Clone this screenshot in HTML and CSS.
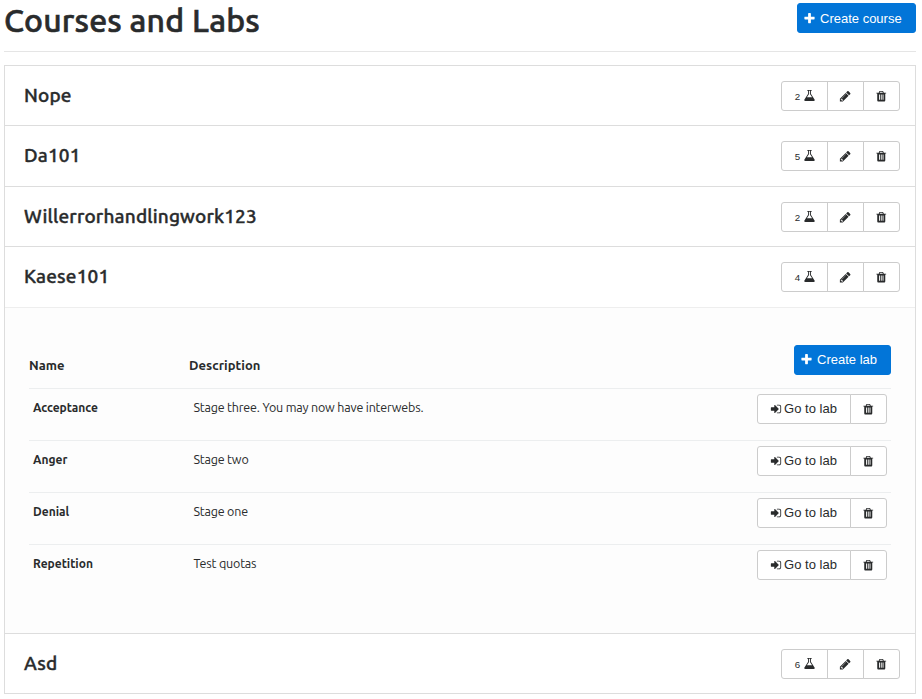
FILE: index.html
```
<!DOCTYPE html>
<html lang="en">
<head>
<meta charset="utf-8">
<title>Courses and Labs</title>
<link rel="stylesheet" href="styles.css">
</head>
<body>
<svg class="sprite" aria-hidden="true">
<symbol id="plus" viewBox="0 0 1792 1792"><path d="M1600 736v192q0 40-28 68t-68 28h-416v416q0 40-28 68t-68 28h-192q-40 0-68-28t-28-68v-416h-416q-40 0-68-28t-28-68v-192q0-40 28-68t68-28h416v-416q0-40 28-68t68-28h192q40 0 68 28t28 68v416h416q40 0 68 28t28 68z"/></symbol>
<symbol id="pencil" viewBox="0 0 1792 1792"><path d="M491 1536l91-91-235-235-91 91v107h128v128h107zm523-928q0-22-22-22-10 0-17 7l-542 542q-7 7-7 17 0 22 22 22 10 0 17-7l542-542q7-7 7-17zm-54-192l416 416-832 832h-416v-416zm683 96q0 53-37 90l-166 166-416-416 166-165q36-38 90-38 53 0 91 38l235 234q37 39 37 91z"/></symbol>
<symbol id="flask" viewBox="0 0 1792 1792"><path d="M1591 1448q56 89 21.5 152.5t-140.5 63.5h-1152q-106 0-140.5-63.5t21.5-152.5l503-793v-399h-64q-26 0-45-19t-19-45 19-45 45-19h512q26 0 45 19t19 45-19 45-45 19h-64v399zm-779-725l-272 429h712l-272-429-20-31v-436h-128v436z"/></symbol>
<symbol id="trash" viewBox="0 0 1792 1792"><path d="M704 1376v-704q0-14-9-23t-23-9h-64q-14 0-23 9t-9 23v704q0 14 9 23t23 9h64q14 0 23-9t9-23zm256 0v-704q0-14-9-23t-23-9h-64q-14 0-23 9t-9 23v704q0 14 9 23t23 9h64q14 0 23-9t9-23zm256 0v-704q0-14-9-23t-23-9h-64q-14 0-23 9t-9 23v704q0 14 9 23t23 9h64q14 0 23-9t9-23zm-544-992h448l-48-117q-7-9-17-11h-317q-10 2-17 11zm928 32v64q0 14-9 23t-23 9h-96v948q0 83-47 143.5t-113 60.5h-832q-66 0-113-58.5t-47-141.5v-952h-96q-14 0-23-9t-9-23v-64q0-14 9-23t23-9h309l70-167q15-37 54-63t79-26h320q40 0 79 26t54 63l70 167h309q14 0 23 9t9 23z"/></symbol>
<symbol id="enter" viewBox="0 0 1792 1792"><path d="M1312 896q0 26-19 45l-544 544q-19 19-45 19t-45-19-19-45v-288h-448q-26 0-45-19t-19-45v-384q0-26 19-45t45-19h448v-288q0-26 19-45t45-19 45 19l544 544q19 19 19 45zm352-352v704q0 119-84.5 203.5t-203.5 84.5h-320q-13 0-22.5-9.5t-9.5-22.5q0-4-1-20t-.5-26.5 3-23.5 10-19.5 20.5-6.5h320q66 0 113-47t47-113v-704q0-66-47-113t-113-47h-312l-11.5-1-11.5-3-8-5.5-7-9-2-13.5q0-4-1-20t-.5-26.5 3-23.5 10-19.5 20.5-6.5h320q119 0 203.5 84.5t84.5 203.5z"/></symbol>
</svg>
<header class="page-head">
<h1>Courses and Labs</h1>
<button class="primary course"><svg><use href="#plus"/></svg>Create course</button>
</header>
<main class="list">
<section class="row"><h2>Nope</h2><div class="group"><button class="count">2<svg><use href="#flask"/></svg></button><button><svg><use href="#pencil"/></svg></button><button><svg><use href="#trash"/></svg></button></div></section>
<section class="row tall"><h2>Da101</h2><div class="group"><button class="count">5<svg><use href="#flask"/></svg></button><button><svg><use href="#pencil"/></svg></button><button><svg><use href="#trash"/></svg></button></div></section>
<section class="row"><h2>Willerrorhandlingwork123</h2><div class="group"><button class="count">2<svg><use href="#flask"/></svg></button><button><svg><use href="#pencil"/></svg></button><button><svg><use href="#trash"/></svg></button></div></section>
<section class="row tall open"><h2>Kaese101</h2><div class="group"><button class="count">4<svg><use href="#flask"/></svg></button><button><svg><use href="#pencil"/></svg></button><button><svg><use href="#trash"/></svg></button></div></section>
<section class="panel">
<div class="labs-head"><b>Name</b><b>Description</b><button class="primary lab"><svg><use href="#plus"/></svg>Create lab</button></div>
<div class="lab-row"><b>Acceptance</b><span>Stage three. You may now have interwebs.</span><div class="group"><button class="go"><svg><use href="#enter"/></svg>Go to lab</button><button><svg><use href="#trash"/></svg></button></div></div>
<div class="lab-row"><b>Anger</b><span>Stage two</span><div class="group"><button class="go"><svg><use href="#enter"/></svg>Go to lab</button><button><svg><use href="#trash"/></svg></button></div></div>
<div class="lab-row"><b>Denial</b><span>Stage one</span><div class="group"><button class="go"><svg><use href="#enter"/></svg>Go to lab</button><button><svg><use href="#trash"/></svg></button></div></div>
<div class="lab-row"><b>Repetition</b><span>Test quotas</span><div class="group"><button class="go"><svg><use href="#enter"/></svg>Go to lab</button><button><svg><use href="#trash"/></svg></button></div></div>
</section>
<section class="row"><h2>Asd</h2><div class="group"><button class="count">6<svg><use href="#flask"/></svg></button><button><svg><use href="#pencil"/></svg></button><button><svg><use href="#trash"/></svg></button></div></section>
</main>
</body>
</html>
```
FILE: styles.css
```
* { box-sizing: border-box; }
body {
  margin: 0;
  padding: 0 6px 0 4px;
  background: #fff;
  color: #292b2c;
  font-family: Ubuntu, "Noto Sans", sans-serif;
  font-size: 12px;
}
.sprite { display: none; }
h1, h2 { margin: 0; font-weight: 500; white-space: nowrap; }
.page-head {
  display: flex;
  justify-content: space-between;
  height: 52px;
  padding-top: 3px;
  border-bottom: 1px solid #e5e5e5;
}
h1 {
  font-size: 32px;
  line-height: 34px;
  letter-spacing: .18px;
  -webkit-text-stroke: .6px currentColor;
}
h2 {
  font-size: 19px;
  line-height: 28px;
  letter-spacing: .16px;
  -webkit-text-stroke: .4px currentColor;
}
button {
  display: flex;
  align-items: center;
  justify-content: center;
  width: 37px;
  height: 30px;
  padding: 0;
  border: 1px solid #ccc;
  background: #fff;
  color: #292b2c;
  font: 13px "Liberation Sans", Arial, sans-serif;
  white-space: nowrap;
}
button svg { width: 12.5px; height: 12.5px; fill: currentColor; flex: none; }
.primary {
  border-color: #0275d8;
  border-radius: 3px;
  background: #0275d8;
  color: #fff;
}
.primary svg { width: 13px; height: 13px; margin-right: 4px; }
.course { width: 119px; }
.course, .lab { justify-content: flex-start; padding: 0 0 1px 5px; }
.course { padding-bottom: 0; }
.list { margin-top: 13px; border: 1px solid #ddd; border-bottom: 0; }
.row {
  display: flex;
  justify-content: space-between;
  height: 60px;
  padding: 15px 15px 0 19px;
  border-bottom: 1px solid #ddd;
}
.tall { height: 61px; }
.open { border-bottom-color: #eee; }
.group { display: flex; }
.group button + button { margin-left: -1px; }
.group button:first-child { border-radius: 3px 0 0 3px; }
.group button:last-child { border-radius: 0 3px 3px 0; }
.group .count { width: 47px; font-size: 9.75px; padding: 1px 0 0 2px; }
.count svg { width: 13px; height: 13px; margin-left: 3px; margin-top: -2px; }
.group .go { width: 94px; padding: 0 1px 1px 0; }
.go svg { width: 12px; height: 12px; margin-right: 2px; }
.panel {
  height: 326px;
  padding: 37px 24px 0;
  border-bottom: 1px solid #ddd;
  background: #fdfdfd;
}
.labs-head, .lab-row { display: grid; grid-template-columns: 160px 1fr auto; }
.labs-head { height: 43px; font-size: 13px; line-height: 41px; letter-spacing: .05px; }
.lab { width: 97px; }
.lab-row {
  height: 52px;
  padding: 5px 4px 0;
  border-top: 1px solid #eceeef;
  line-height: 27px;
}
.lab-row span { padding-left: .4px; font-size: 12.5px; letter-spacing: -.18px; }
```
